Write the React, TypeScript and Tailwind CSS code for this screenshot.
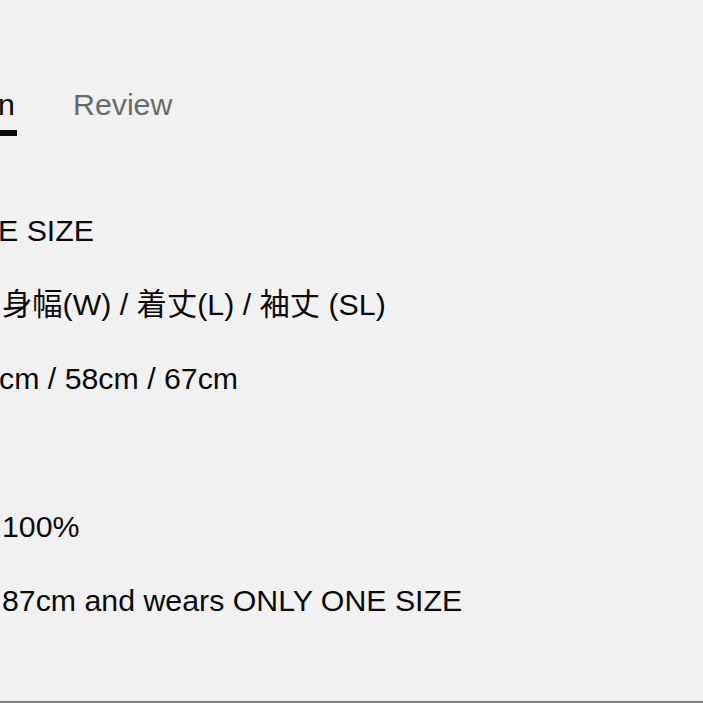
import React from "react";

const font = {
  fontFamily:
    '"Liberation Sans", Arial, Helvetica, "Noto Sans CJK JP", sans-serif',
};

function Line({ children, className = "" }: { children: React.ReactNode; className?: string }) {
  return (
    <div className={`h-[74px] whitespace-nowrap text-[30.3px] leading-[74px] text-[#0a0a0a] ${className}`}>
      {children}
    </div>
  );
}

export default function App() {
  return (
    <div
      className="h-[703px] w-full overflow-hidden border-b-2 border-[#808080] bg-[#f1f1f1]"
      style={font}
    >
      <div className="pt-[88px]">
        <div className="flex items-start gap-[56px] text-[30.3px] leading-[34px]">
          <div className="-ml-[2px] flex flex-col">
            <span className="text-[#0a0a0a]">n</span>
            <div className="ml-[2px] mt-[8px] h-[6px] w-[17px] bg-[#0a0a0a]" />
          </div>
          <span className="text-[#6a6a6a]">Review</span>
        </div>
        <div className="mt-[58px] flex flex-col">
          <Line className="-ml-[2px]">E SIZE</Line>
          <Line className="ml-[2px]">身幅(W) / 着丈(L) / 袖丈 (SL)</Line>
          <Line className="-ml-[1px]">cm / 58cm / 67cm</Line>
          <Line> </Line>
          <Line className="ml-[2px]">100%</Line>
          <Line className="ml-[2px]">87cm and wears ONLY ONE SIZE</Line>
        </div>
      </div>
    </div>
  );
}
